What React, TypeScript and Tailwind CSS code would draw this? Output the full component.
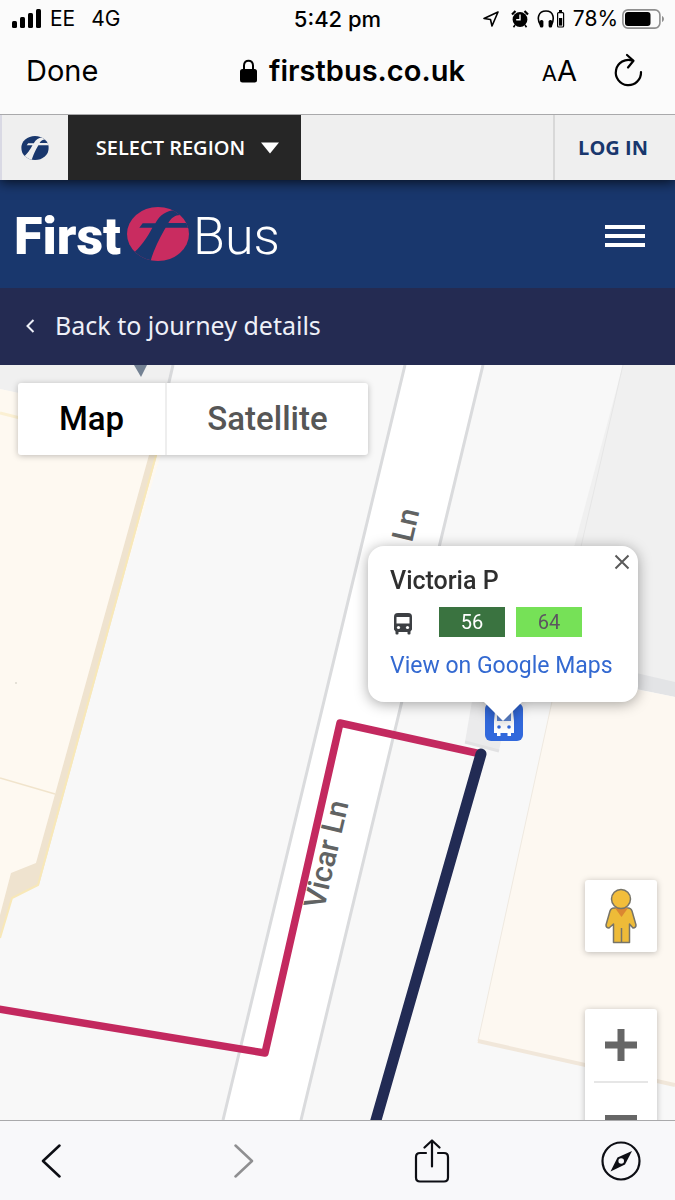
import { ReactNode, useState } from 'react';
import clsx from 'clsx';

type MapType = 'Map' | 'Satellite';

const MAP_TYPES: MapType[] = ['Map', 'Satellite'];

const ROUTES = [
  { name: '56', className: 'bg-[#3a7340] text-white' },
  { name: '64', className: 'bg-[#76e157] text-[#5c5560]' },
];

function FirstMark({ id, className, cut }: { id: string; className?: string; cut: string }) {
  return (
    <svg viewBox="0 0 186 162" className={className} aria-hidden="true">
      <clipPath id={id}>
        <ellipse cx="93" cy="81" rx="93" ry="81" />
      </clipPath>
      <g clipPath={`url(#${id})`}>
        <rect width="186" height="162" fill="currentColor" />
        <path
          d="M10 146 C42 120 60 92 76 62 H37 L47 49 H85 C98 24 118 10 148 8 L172 26 C150 20 134 30 124 48 H190 V62 H116 C104 82 78 130 70 166 L10 166 Z"
          fill={cut}
        />
      </g>
    </svg>
  );
}

function StatusBar() {
  return (
    <div className="grid h-[37px] grid-cols-[1fr_auto_1fr] items-center px-3 text-[21px] leading-9">
      <div className="flex items-center gap-2">
        <svg viewBox="0 0 30 19" className="h-[19px] w-[30px]" aria-hidden="true">
          <rect x="0" y="12" width="5" height="7" rx="1.5" />
          <rect x="8" y="8" width="5" height="11" rx="1.5" />
          <rect x="16" y="4" width="5" height="15" rx="1.5" />
          <rect x="24" y="0" width="5" height="19" rx="1.5" />
        </svg>
        <span>EE</span>
        <span className="ml-2">4G</span>
      </div>
      <time className="text-[22px] font-medium">5:42 pm</time>
      <div className="-mr-0.5 flex items-center justify-end">
        <svg viewBox="0 0 16 16" className="mr-3 size-4" fill="none" stroke="black" strokeWidth="1.6" strokeLinejoin="round" aria-hidden="true">
          <path d="M15 1 L1 7.5 L7.5 8.5 L9 15 Z" />
        </svg>
        <svg viewBox="0 0 18 18" className="mr-2 size-[18px]" aria-hidden="true">
          <circle cx="9" cy="9.5" r="7.4" />
          <path d="M1 4.5 L4.5 1 M17 4.5 L13.5 1" stroke="black" strokeWidth="2.2" />
          <path d="M4 15 L2.5 17.2 M14 15 L15.5 17.2" stroke="black" strokeWidth="1.6" />
          <path d="M9 4.5 V9.8 H5.2" fill="none" stroke="white" strokeWidth="1.4" />
        </svg>
        <svg viewBox="0 0 28 19" className="mr-2 h-[19px] w-7" aria-hidden="true">
          <path d="M3.5 16 C-0.5 10 1 2 9 2 S17.5 10 14.5 16" fill="none" stroke="black" strokeWidth="1.6" />
          <rect x="2.8" y="11" width="3.6" height="7.5" rx="1.6" />
          <rect x="11.6" y="11" width="3.6" height="7.5" rx="1.6" />
          <rect x="20.6" y="3.6" width="6" height="14.4" rx="1" fill="none" stroke="black" strokeWidth="1.2" />
          <rect x="22" y="1" width="3" height="2" />
          <rect x="22" y="9" width="3.2" height="7.6" />
        </svg>
        <span>78%</span>
        <svg viewBox="0 0 43 20" className="ml-1 h-5 w-[43px]" aria-hidden="true">
          <rect x="0.9" y="0.9" width="37" height="18.2" rx="5" fill="none" stroke="#8f8f8f" strokeWidth="1.6" />
          <rect x="3" y="3" width="25.5" height="14" rx="3" />
          <path d="M40 7 C42.6 8 42.6 12 40 13 Z" fill="#8f8f8f" />
        </svg>
      </div>
    </div>
  );
}

function AddressBar() {
  return (
    <div className="relative z-20 grid h-[78px] grid-cols-[1fr_auto_1fr] items-center border-b border-[#a9a9ab] bg-[#fbfbfb] pb-2.5 pl-[26px] pr-8">
      <button className="justify-self-start text-[29px]">Done</button>
      <div className="flex items-center gap-3 pl-9">
        <svg viewBox="0 0 17 24" className="h-6 w-[17px]" aria-hidden="true">
          <path d="M4 11 V6.5 C4 0 13 0 13 6.5 V11" fill="none" stroke="black" strokeWidth="2" />
          <rect x="0" y="10" width="17" height="13.5" rx="2.5" />
        </svg>
        <span className="text-[29px] font-semibold">firstbus.co.uk</span>
      </div>
      <div className="flex items-center justify-end gap-9">
        <button className="flex items-baseline" aria-label="Text size">
          <span className="text-[22px]">A</span>
          <span className="text-[29px]">A</span>
        </button>
        <button aria-label="Reload">
          <svg viewBox="0 0 30 36" className="h-9 w-[30px]" fill="none" stroke="black" strokeWidth="2.2" strokeLinecap="round" strokeLinejoin="round">
            <path d="M28 19 A12.6 12.6 0 1 1 19.5 7.600" />
            <path d="M14 2 L20.500 7.800 L15 14.500" />
          </svg>
        </button>
      </div>
    </div>
  );
}

function RegionBar() {
  return (
    <div className="relative z-10 flex h-[65px] items-stretch bg-[#efefef] font-['Open_Sans',sans-serif] text-xl shadow-[0_2px_12px_rgba(0,0,0,0.75)]">
      <a href="#home" aria-label="First" className="flex w-[68px] items-center justify-center border-l-2 border-[#d9d9e4] text-[#19376d]">
        <FirstMark id="mark-small" className="h-6 w-7" cut="#efefef" />
      </a>
      <button className="flex w-[233px] items-center justify-center gap-4 bg-[#262626] pl-1.5 font-semibold text-white">
        SELECT REGION
        <svg viewBox="0 0 18 12" className="h-3 w-[18px]" aria-hidden="true">
          <path d="M0 0.5 H18 L9 11.5 Z" fill="white" />
        </svg>
      </button>
      <a href="#login" className="ml-auto flex w-[122px] items-center justify-center border-l-2 border-[#d8d8d8] pr-1 font-bold text-[#19376d]">
        LOG IN
      </a>
    </div>
  );
}

function SiteHeader() {
  return (
    <header className="flex h-[108px] items-center justify-between bg-[#19376d] pl-3.5 pr-[30px] text-white">
      <a href="#home" aria-label="First Bus" className="flex items-center font-[Roboto,sans-serif] text-[52px] leading-none">
        <span className="pt-1.5 font-black">First</span>
        <FirstMark id="mark-large" className="ml-1.5 mr-1 h-[54px] w-[62px] text-[#c92c60]" cut="#19376d" />
        <span className="pt-1.5 font-light">Bus</span>
      </a>
      <button aria-label="Menu" className="mt-1 flex w-10 flex-col gap-[5px]">
        <span className="h-1 bg-white" />
        <span className="h-1 bg-white" />
        <span className="h-1 bg-white" />
      </button>
    </header>
  );
}

function MapCanvas() {
  return (
    <svg viewBox="0 0 675 755" preserveAspectRatio="xMinYMin slice" className="absolute inset-0 size-full font-[Roboto,sans-serif]" aria-hidden="true">
      <rect width="675" height="755" fill="#f8f8f8" />

      {/* buildings on the left */}
      <path d="M0 0 H173 L160 60 L0 24 Z" fill="#f0f0f0" />
      <path d="M173 0 L160 56" stroke="#d8d9db" strokeWidth="3" />
      <path d="M0 24 L170 60 L36 500 L11 510 L0 556 Z" fill="#fef9f1" />
      <path d="M0 48 L40 58" stroke="#fbf0d3" strokeWidth="3" />
      <path d="M154 72 L36 498 L11 508 L0 550 V573 L12 533 L39 520 L162 72 Z" fill="#efe3cf" />
      <path d="M161 72 L38 520 L12 533 L0 573" fill="none" stroke="#f8e8b8" strokeWidth="2" />
      <path d="M0 413 L55 429" stroke="#f1e4cc" strokeWidth="1.5" />
      <circle cx="16" cy="318" r="1" fill="#ddd8ce" />
      <path d="M134 0 H147 L141 12 Z" fill="#738193" />

      {/* buildings on the right */}
      <path d="M623 0 H675 V320 L545 290 Z" fill="#f0f0f0" />
      <path d="M623 0 L556 290" stroke="#e6e6e6" strokeWidth="1" />
      <path d="M550 288 L675 317 V332 L550 306 Z" fill="#e3e4e6" />
      <path d="M558 309 L675 332 V720 L478 676 Z" fill="#fdf8f1" />
      <path d="M558 309 L478 676" stroke="#efe9e0" strokeWidth="1" />
      <path d="M478 676 L675 720" stroke="#f1e7da" strokeWidth="4" />
      <path d="M473 330 H510 L499 386 L465 377 Z" fill="#ebebec" />
      <path d="M465 377 L499 386" stroke="#e2e2e3" strokeWidth="3" />

      {/* Vicar Lane */}
      <path d="M405 0 H483 L301 755 H223 Z" fill="#ffffff" />
      <path d="M405 0 L223 755 M483 0 L301 755" stroke="#dadbdd" strokeWidth="3" />
      <g fill="#616363" fontSize="30" fontWeight="500">
        <text transform="translate(324 545) rotate(-77)">Vicar Ln</text>
        <text transform="translate(412 178) rotate(-77)">Ln</text>
      </g>

      {/* route */}
      <path d="M-5 643.5 L265 688 L340 358 L481 389" fill="none" stroke="#c3295f" strokeWidth="7.5" strokeLinejoin="round" />
      <path d="M481 389 L374 762" stroke="#222b54" strokeWidth="11" strokeLinecap="round" />
    </svg>
  );
}

function BusStopMarker() {
  return (
    <svg viewBox="0 0 38 38" className="size-[38px]" aria-hidden="true">
      <rect width="38" height="38" rx="6" fill="#3269dc" />
      <path d="M10 8 H28 L29 18 V30 H26 V33 H22.5 V30 H15.5 V33 H12 V30 H9 V18 Z" fill="white" />
      <path d="M12 10 H26 V18 H12 Z" fill="#5f87d4" />
      <circle cx="14" cy="24" r="1.8" fill="#3269dc" />
      <circle cx="24" cy="24" r="1.8" fill="#3269dc" />
    </svg>
  );
}

function InfoWindow({ onClose }: { onClose: () => void }) {
  return (
    <div className="absolute left-[368px] top-[181px] w-[270px] font-[Roboto,sans-serif] drop-shadow-[0_2px_7px_rgba(0,0,0,0.35)]">
      <div className="relative rounded-2xl bg-white px-[22px] pb-[21px] pt-5">
        <button onClick={onClose} aria-label="Close" className="absolute right-2 top-2">
          <svg viewBox="0 0 16 16" className="size-4" stroke="#5a5a5a" strokeWidth="2">
            <path d="M1.5 1.5 L14.5 14.5 M14.5 1.5 L1.5 14.5" />
          </svg>
        </button>
        <h2 className="text-[25px] leading-[30px] font-medium text-[#2f2f2f]">Victoria P</h2>
        <div className="mt-[11px] flex h-[30px] items-center text-xl">
          <svg viewBox="0 0 20 22" className="ml-[3px] mr-[26px] mt-1 h-[22px] w-5" aria-hidden="true">
            <path
              d="M5 0 H15 C18 0 19 1.5 19 4 V16.5 L17.5 18.5 V20.5 Q17.5 21.5 16.5 21.5 H15.5 Q14.5 21.5 14.5 20.5 V19 H5.5 V20.5 Q5.5 21.5 4.5 21.5 H3.5 Q2.5 21.5 2.5 20.5 V18.5 L1 16.5 V4 C1 1.5 2 0 5 0 Z"
              fill="#3c3f43"
            />
            <path d="M3.5 4 H16.5 V10.5 H3.5 Z" fill="white" />
            <circle cx="5.5" cy="14.5" r="1.6" fill="white" />
            <circle cx="14.5" cy="14.5" r="1.6" fill="white" />
          </svg>
          {ROUTES.map((route) => (
            <span key={route.name} className={clsx('mr-[11px] w-[66px] text-center leading-[30px]', route.className)}>
              {route.name}
            </span>
          ))}
        </div>
        <a href="#google-maps" className="mt-[14px] block whitespace-nowrap text-[23px] leading-[30px] text-[#3369d1]">
          View on Google Maps
        </a>
      </div>
      <svg viewBox="0 0 40 20" className="mx-auto -mt-px h-5 w-10" aria-hidden="true">
        <path d="M0 0 H40 L20 20 Z" fill="white" />
      </svg>
    </div>
  );
}

function MapControl({ className, children }: { className?: string; children: ReactNode }) {
  return (
    <div className={clsx('w-[72px] rounded-[3px] bg-white shadow-[0_1px_6px_rgba(0,0,0,0.25)]', className)}>{children}</div>
  );
}

function Pegman() {
  return (
    <svg viewBox="0 0 32 56" className="h-14 w-8" stroke="#777468" strokeWidth="1.5" strokeLinejoin="round" aria-hidden="true">
      <path
        d="M9 20 H23 Q26 20 27 23 L31 37 Q31 40 28 40 L24.5 36 V54.5 H8.5 V36 L4 40 Q1 40 1 37 L5 23 Q6 20 9 20 Z"
        fill="#eebb38"
      />
      <path d="M16.5 40 V54" />
      <path d="M10 20 H23 L16.5 29 Z" fill="#db8731" stroke="none" />
      <circle cx="16" cy="11" r="9.5" fill="#f3be3b" />
    </svg>
  );
}

function JourneyMap() {
  const [mapType, setMapType] = useState<MapType>('Map');
  const [infoOpen, setInfoOpen] = useState(true);

  return (
    <main className="relative min-h-0 flex-1 overflow-hidden">
      <MapCanvas />
      <div className="absolute left-[485px] top-[338px]">
        <BusStopMarker />
      </div>

      <div className="absolute left-[18px] top-[18px] flex h-[72px] rounded-[3px] bg-white font-[Roboto,sans-serif] text-[33px] shadow-[0_1px_6px_rgba(0,0,0,0.25)]">
        {MAP_TYPES.map((type) => (
          <button
            key={type}
            onClick={() => setMapType(type)}
            className={clsx(
              'font-medium',
              type === 'Map' ? 'w-[147px]' : 'w-[203px] border-l-2 border-[#eeeeee]',
              type === mapType ? 'text-black' : 'text-[#565656]'
            )}
          >
            {type}
          </button>
        ))}
      </div>

      {infoOpen && <InfoWindow onClose={() => setInfoOpen(false)} />}

      <div className="absolute right-[18px] top-[515px] flex flex-col gap-[57px]">
        <MapControl>
          <button aria-label="Street View" className="flex h-[72px] w-full items-center justify-center">
            <Pegman />
          </button>
        </MapControl>
        <MapControl>
          <button aria-label="Zoom in" className="flex h-[72px] w-full items-center justify-center">
            <svg viewBox="0 0 32 32" className="size-8" fill="#666666">
              <path d="M12.5 0 H19.5 V12.5 H32 V19.5 H19.5 V32 H12.5 V19.5 H0 V12.5 H12.5 Z" />
            </svg>
          </button>
          <hr className="mx-[9px] border-t-2 border-[#e6e6e6]" />
          <button aria-label="Zoom out" className="flex h-[72px] w-full items-center justify-center">
            <span className="h-2 w-8 bg-[#666666]" />
          </button>
        </MapControl>
      </div>
    </main>
  );
}

function Toolbar() {
  return (
    <nav className="relative flex h-20 items-center justify-between border-t border-[#a9a9ab] bg-[#f8f8fa] pl-10 pr-[34px]">
      <button aria-label="Back" className="flex w-10">
        <svg viewBox="0 0 24 34" className="h-[34px] w-6" fill="none" stroke="#0d0e14" strokeWidth="2.5" strokeLinecap="round" strokeLinejoin="round">
          <path d="M19.5 1.5 L3 17 L19.5 32.5" />
        </svg>
      </button>
      <button aria-label="Forward" disabled className="flex w-10 justify-center pr-2">
        <svg viewBox="0 0 24 34" className="h-[34px] w-6" fill="none" stroke="#8f8f91" strokeWidth="2.5" strokeLinecap="round" strokeLinejoin="round">
          <path d="M4.5 1.5 L21 17 L4.5 32.5" />
        </svg>
      </button>
      <button aria-label="Share" className="w-10">
        <svg viewBox="0 0 36 44" className="h-11 w-9" fill="none" stroke="#0d0e14" strokeWidth="2.2" strokeLinecap="round" strokeLinejoin="round">
          <path d="M12 14 H6 Q2 14 2 18 V38.5 Q2 42.5 6 42.5 H30 Q34 42.5 34 38.5 V18 Q34 14 30 14 H24" />
          <path d="M18 27.5 V1.5 M10.5 8.5 L18 1.5 L25.5 8.5" />
        </svg>
      </button>
      <button aria-label="Open in Safari" className="w-10">
        <svg viewBox="0 0 40 40" className="size-10">
          <circle cx="20" cy="20" r="18.5" fill="none" stroke="#0d0e14" strokeWidth="2.2" />
          <path d="M31 10 L24 23.5 L9.5 30.5 L16.5 16.5 Z" fill="#0d0e14" />
          <circle cx="20.2" cy="20" r="2.8" fill="#f8f8fa" />
        </svg>
      </button>
    </nav>
  );
}

export default function App() {
  return (
    <div className="flex h-screen flex-col overflow-hidden bg-[#fbfbfb] font-[Inter,sans-serif] text-black">
      <StatusBar />
      <AddressBar />
      <RegionBar />
      <SiteHeader />
      <div className="flex h-[77px] items-center bg-[#242b52] pb-0.5 pl-[26px] font-['Noto_Sans',sans-serif] text-[25px] text-[#eef0f8]">
        <a href="#journey" className="flex items-center gap-5">
          <svg viewBox="0 0 9 14" className="h-[14px] w-[9px]" fill="none" stroke="currentColor" strokeWidth="2" aria-hidden="true">
            <path d="M7.5 1 L1.5 7 L7.5 13" />
          </svg>
          Back to journey details
        </a>
      </div>
      <JourneyMap />
      <Toolbar />
    </div>
  );
}
